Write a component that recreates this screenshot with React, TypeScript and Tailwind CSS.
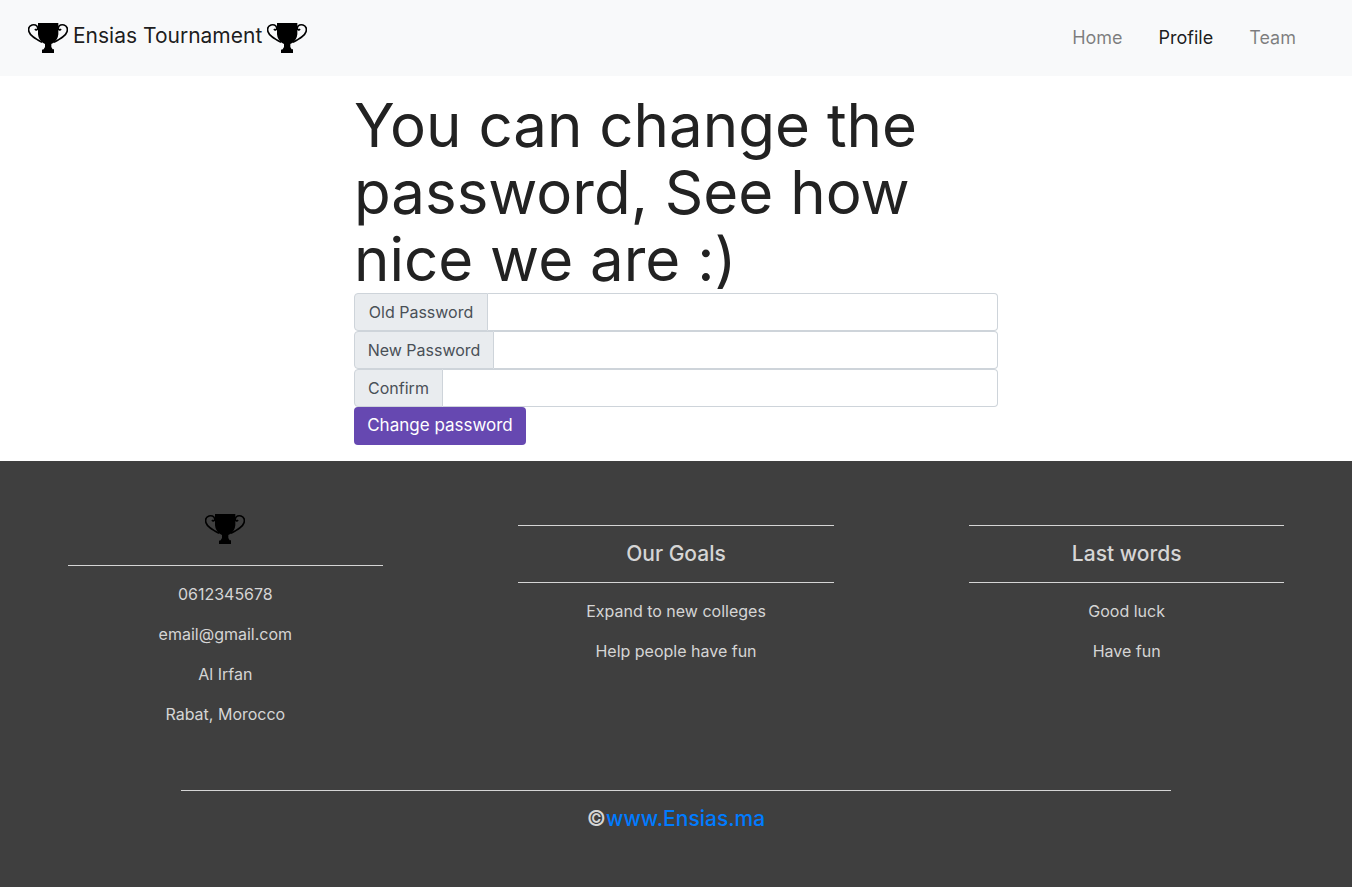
import React from "react";

function Trophy() {
  return (
    <svg viewBox="0 0 120 90" className="h-[30px] w-10 shrink-0" aria-hidden="true">
      <path
        d="M30 0H91V34C90 46 84 53 77 59L70 63V72L74 79H78V90H42V80L47 79L51 72V63L44 59C37 53 31 46 30 34Z"
        fill="#000"
      />
      <g fill="none" stroke="#000" strokeWidth="5">
        <path d="M21 18C24 23 30 21 29 14C27 6 19 4 12 6C3 9 0 17 3 26C7 39 22 47 42 58" />
        <path d="M99 18C96 23 90 21 91 14C93 6 101 4 108 6C117 9 120 17 117 26C113 39 98 47 78 58" />
      </g>
    </svg>
  );
}

type FieldProps = { id: string; label: string; labelWidth: string };

function PasswordField({ id, label, labelWidth }: FieldProps) {
  return (
    <div className="flex h-[38px] w-full">
      <label
        htmlFor={id}
        className={`flex shrink-0 items-center justify-center rounded-l border border-[#ced4da] bg-[#e9ecef] whitespace-nowrap text-[#495057] ${labelWidth}`}
      >
        {label}
      </label>
      <input
        id={id}
        type="password"
        className="min-w-0 flex-1 rounded-r border border-l-0 border-[#ced4da] bg-white px-3"
      />
    </div>
  );
}

function Rule() {
  return <hr className="my-4 border-t border-[#d5d5d5]" />;
}

function FooterColumn({ title, lines }: { title: string; lines: string[] }) {
  return (
    <div className="px-[15%]">
      <Rule />
      <h5 className="text-[21px] leading-6 font-medium">{title}</h5>
      <Rule />
      {lines.map((line) => (
        <p key={line} className="mb-4 leading-6">{line}</p>
      ))}
    </div>
  );
}

export default function App() {
  return (
    <div className="flex min-h-screen flex-col bg-white font-[Inter,sans-serif] text-base text-[#212529]">
      <nav className="flex h-[76px] items-center justify-between bg-[#f8f9fa] pr-14 pl-7">
        <a href="#" className="flex items-center gap-[5px] text-[21px] text-black/90">
          <Trophy />
          <span className="pb-1">Ensias Tournament</span>
          <Trophy />
        </a>
        <div className="flex gap-9 text-lg text-black/50">
          <a href="#home">Home</a>
          <a href="#profile" className="text-black/90">Profile</a>
          <a href="#team">Team</a>
        </div>
      </nav>

      <main className="mx-auto w-full max-w-[644px] py-4">
        <h1 className="text-[60px] leading-[67px] text-[#222222]">
          You can change the password, See how nice we are :)
        </h1>
        <form>
          <PasswordField id="old-password" label="Old Password" labelWidth="w-[134px]" />
          <PasswordField id="new-password" label="New Password" labelWidth="w-[140px]" />
          <PasswordField id="confirm" label="Confirm" labelWidth="w-[89px]" />
          <button type="button" className="h-[38px] w-[172px] rounded bg-[#6648b1] text-[17px] whitespace-nowrap text-white">
            Change password
          </button>
        </form>
      </main>

      <footer className="flex-1 bg-[#3f3f3f] pt-12 pb-10 text-center text-[#d5d5d5]">
        <div className="grid grid-cols-3">
          <div className="px-[15%]">
            <div className="flex justify-center py-[5px]">
              <Trophy />
            </div>
            <Rule />
            <p className="mb-4 leading-6">0612345678</p>
            <p className="mb-4 leading-6">email@gmail.com</p>
            <p className="mb-4 leading-6">Al Irfan</p>
            <p className="mb-4 leading-6">Rabat, Morocco</p>
          </div>
          <FooterColumn title="Our Goals" lines={["Expand to new colleges", "Help people have fun"]} />
          <FooterColumn title="Last words" lines={["Good luck", "Have fun"]} />
        </div>
        <div className="px-[13.4%] pt-8">
          <Rule />
          <h5 className="text-[21px] leading-6 font-medium">
            ©<a href="#ensias" className="text-[#007bff]">www.Ensias.ma</a>
          </h5>
        </div>
      </footer>
    </div>
  );
}
